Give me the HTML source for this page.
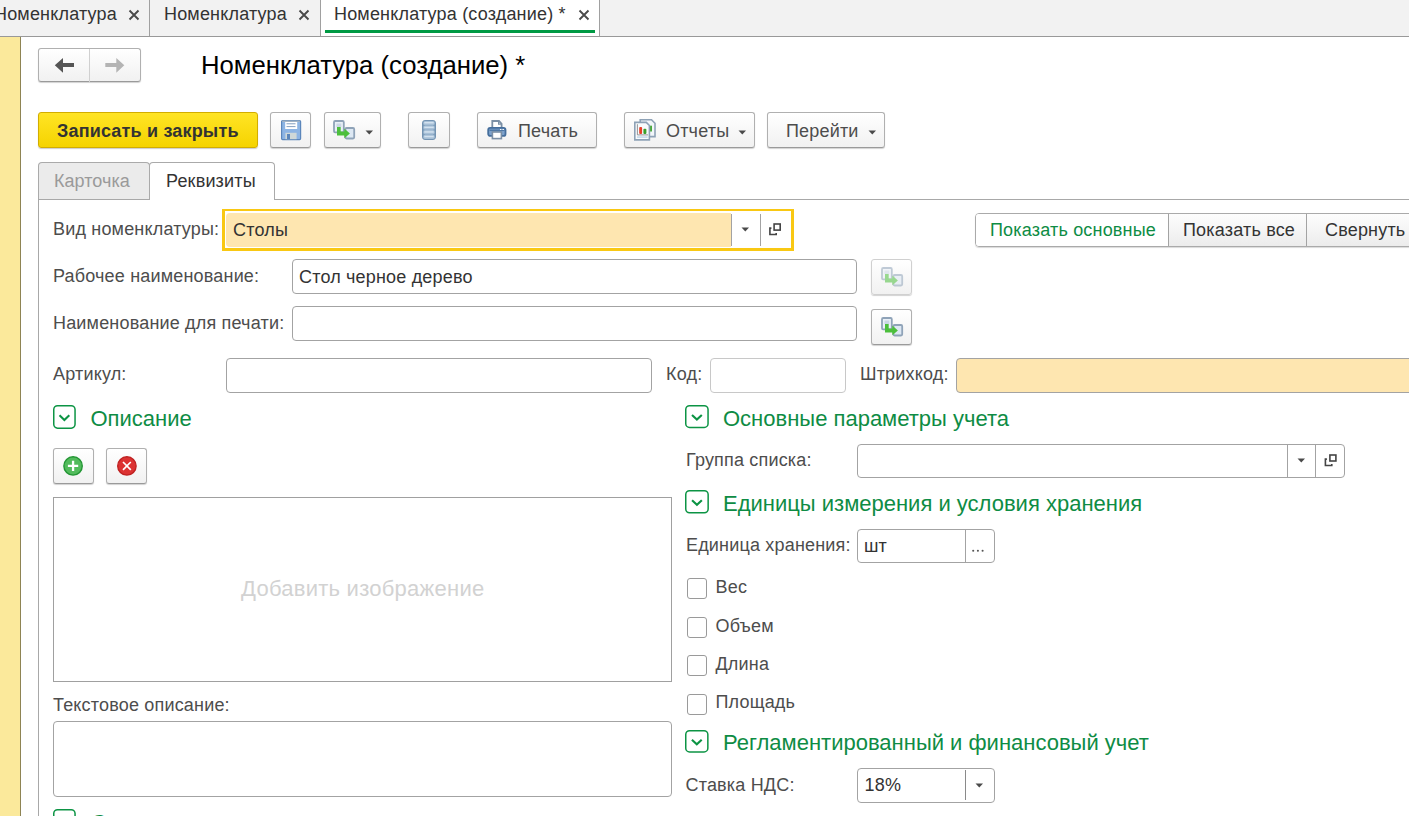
<!DOCTYPE html>
<html><head><meta charset="utf-8">
<style>
*{box-sizing:border-box;margin:0;padding:0}
html,body{width:1409px;height:816px;overflow:hidden;background:#fff}
body{position:relative;font-family:"Liberation Sans",sans-serif;font-size:18px;color:#4d4d4d;letter-spacing:.18px}
.a{position:absolute}
.t{position:absolute;white-space:nowrap;line-height:1}
/* tab bar */
#tabbar{left:0;top:0;width:1409px;height:37px;background:#f2f2f2;border-bottom:1px solid #999}
.tdiv{position:absolute;top:0;width:1px;height:36px;background:#a0a0a0}
#strip{left:0;top:37px;width:21px;height:779px;background:#fbe99b;border-right:1px solid #8e8454}
.btn{position:absolute;border:1px solid #b0b0b0;border-bottom-color:#9a9a9a;border-radius:3px;background:linear-gradient(#ffffff,#f1f1f1);box-shadow:0 1px 1px rgba(0,0,0,.18)}
.inp{position:absolute;border:1px solid #a3a3a3;border-radius:4px;background:#fff}
.lbl{position:absolute;white-space:nowrap;line-height:1;font-size:18px;color:#4d4d4d}
.grn{color:#0e8c44}
.coll{position:absolute;width:23px;height:24px;border:1.5px solid #0c9444;border-radius:4px}
.coll:after{content:"";position:absolute;left:7.2px;top:6.6px;width:5px;height:5px;border-right:1.8px solid #0c9444;border-bottom:1.8px solid #0c9444;transform:rotate(45deg)}
.chk{position:absolute;width:20px;height:21px;border:1px solid #9a9a9a;border-radius:3px;background:#fff}
.tri{position:absolute;width:0;height:0;border-left:3.5px solid transparent;border-right:3.5px solid transparent;border-top:4px solid #4a4a4a}
.sep{position:absolute;width:1px;background:#a3a3a3}
</style></head><body>

<div id="tabbar" class="a"></div>
<div class="a" style="left:320px;top:0;width:280px;height:36px;background:#fff"></div>
<div class="t" style="left:-6px;top:5px;color:#333">Номенклатура</div>
<svg class="a" style="left:128px;top:9px" width="12" height="12"><path d="M1.5 1.5L10.5 10.5M10.5 1.5L1.5 10.5" stroke="#4a4a4a" stroke-width="1.9"/></svg>
<div class="tdiv" style="left:149px"></div>
<div class="t" style="left:164px;top:5px;color:#333">Номенклатура</div>
<svg class="a" style="left:298px;top:9px" width="12" height="12"><path d="M1.5 1.5L10.5 10.5M10.5 1.5L1.5 10.5" stroke="#4a4a4a" stroke-width="1.9"/></svg>
<div class="tdiv" style="left:320px"></div>
<div class="t" style="left:334px;top:5px;color:#333">Номенклатура (создание) *</div>
<svg class="a" style="left:578px;top:9px" width="12" height="12"><path d="M1.5 1.5L10.5 10.5M10.5 1.5L1.5 10.5" stroke="#4a4a4a" stroke-width="1.9"/></svg>
<div class="a" style="left:325px;top:30px;width:270px;height:3px;background:#009a44"></div>
<div class="tdiv" style="left:599px"></div>

<div id="strip" class="a"></div>

<!-- nav buttons -->
<div class="btn" style="left:38px;top:48px;width:103px;height:34px"></div>
<div class="a" style="left:89px;top:49px;width:1px;height:33px;background:#d0d0d0"></div>

<div class="t" style="left:201px;top:53px;font-size:25.7px;color:#000;letter-spacing:0">Номенклатура (создание) *</div>


<!-- toolbar -->
<div class="a" style="left:38px;top:112px;width:220px;height:36px;border:1px solid #d2ad00;border-radius:3px;background:linear-gradient(#ffe425,#f5d300);box-shadow:0 1px 1px rgba(0,0,0,.2)"></div>
<div class="t" style="left:57px;top:122px;font-weight:bold;color:#333">Записать и закрыть</div>

<div class="btn" style="left:270px;top:112px;width:41px;height:36px"></div>
<div class="btn" style="left:324px;top:112px;width:57px;height:36px"></div>
<svg class="a" style="left:364.5px;top:129.5px" width="9" height="6"><path d="M0.5 0.5H8L4.25 4.6Z" fill="#4a4a4a"/></svg>
<div class="btn" style="left:408px;top:112px;width:42px;height:36px"></div>
<div class="btn" style="left:477px;top:112px;width:120px;height:36px"></div>
<div class="t" style="left:518px;top:122px">Печать</div>
<div class="btn" style="left:624px;top:112px;width:131px;height:36px"></div>
<div class="t" style="left:666px;top:122px">Отчеты</div>
<svg class="a" style="left:737.5px;top:129.5px" width="9" height="6"><path d="M0.5 0.5H8L4.25 4.6Z" fill="#4a4a4a"/></svg>
<div class="btn" style="left:767px;top:112px;width:118px;height:36px"></div>
<div class="t" style="left:786px;top:122px">Перейти</div>
<svg class="a" style="left:867.5px;top:129.5px" width="9" height="6"><path d="M0.5 0.5H8L4.25 4.6Z" fill="#4a4a4a"/></svg>

<!-- page tabs -->
<div class="a" style="left:38px;top:199px;width:1371px;height:1px;background:#a8a8a8"></div>
<div class="a" style="left:38px;top:199px;width:1px;height:617px;background:#a8a8a8"></div>
<div class="a" style="left:38px;top:162px;width:112px;height:37px;border:1px solid #aaa;border-bottom:none;border-radius:4px 4px 0 0;background:#ebebeb"></div>
<div class="t" style="left:54px;top:172px;color:#9a9a9a;letter-spacing:.05px">Карточка</div>
<div class="a" style="left:149px;top:162px;width:126px;height:38px;border:1px solid #aaa;border-bottom:none;border-radius:4px 4px 0 0;background:#fff"></div>
<div class="t" style="left:166px;top:172px;color:#333">Реквизиты</div>

<!-- fields -->
<div class="lbl" style="left:53px;top:220px">Вид номенклатуры:</div>
<div class="a" style="left:222px;top:209px;width:572px;height:42px;border:3px solid #f9c813;border-top-width:2px;background:#fff"></div>
<div class="a" style="left:226px;top:213px;width:505px;height:34px;border-radius:4px 0 0 4px;background:#fee6b0"></div>
<div class="sep" style="left:731px;top:214px;height:32px"></div>
<div class="sep" style="left:760px;top:214px;height:32px"></div>
<svg class="a" style="left:741.0px;top:226.5px" width="9" height="6"><path d="M0.5 0.5H8L4.25 4.6Z" fill="#4a4a4a"/></svg>
<div class="t" style="left:233px;top:221px;color:#333">Столы</div>

<div class="lbl" style="left:53px;top:267px">Рабочее наименование:</div>
<div class="inp" style="left:292px;top:259px;width:565px;height:35px"></div>
<div class="t" style="left:299px;top:268px;color:#333">Стол черное дерево</div>
<div class="btn" style="left:871px;top:259px;width:41px;height:36px;border-color:#d0d0d0"></div>

<div class="lbl" style="left:53px;top:314px">Наименование для печати:</div>
<div class="inp" style="left:292px;top:306px;width:565px;height:35px"></div>
<div class="btn" style="left:871px;top:309px;width:41px;height:36px"></div>

<div class="lbl" style="left:53px;top:365px">Артикул:</div>
<div class="inp" style="left:226px;top:358px;width:426px;height:35px"></div>
<div class="lbl" style="left:666px;top:365px">Код:</div>
<div class="inp" style="left:710px;top:358px;width:136px;height:35px;border-color:#c8c8c8"></div>
<div class="lbl" style="left:860px;top:365px">Штрихкод:</div>
<div class="inp" style="left:956px;top:358px;width:470px;height:35px;background:#fee6b0"></div>

<!-- switch buttons -->
<div class="a" style="left:975px;top:213px;width:450px;height:34px;border:1px solid #aaa;border-radius:4px;background:linear-gradient(#fdfdfd,#ececec);box-shadow:0 1px 1px rgba(0,0,0,.15)"></div>
<div class="a" style="left:976px;top:214px;width:192px;height:32px;border-radius:3px 0 0 3px;background:#fff"></div>
<div class="sep" style="left:1168px;top:214px;height:32px"></div>
<div class="sep" style="left:1306px;top:214px;height:32px"></div>
<div class="t grn" style="left:990px;top:221px">Показать основные</div>
<div class="t" style="left:1183px;top:221px;color:#333">Показать все</div>
<div class="t" style="left:1325px;top:221px;color:#333">Свернуть</div>


<!-- left column -->
<svg class="a" style="left:53.1px;top:404.9px" width="23.8" height="24.9"><rect x="0.75" y="0.75" width="21.30" height="22.40" rx="3.8" fill="none" stroke="#0c9444" stroke-width="1.5"/><path d="M6.50 10.35L11.40 14.95L16.30 10.35" fill="none" stroke="#0c9444" stroke-width="2.1"/></svg>
<div class="t grn" style="left:90.5px;top:408px;font-size:22px;letter-spacing:0">Описание</div>
<div class="btn" style="left:53px;top:448px;width:41px;height:36px"></div>
<div class="btn" style="left:106px;top:448px;width:41px;height:36px"></div>
<div class="a" style="left:53px;top:497px;width:619px;height:185px;border:1px solid #a0a0a0;background:#fff"></div>
<div class="t" style="left:241px;top:578px;font-size:22px;color:#d2d2d2;letter-spacing:.25px">Добавить изображение</div>
<div class="lbl" style="left:53px;top:696px">Текстовое описание:</div>
<div class="inp" style="left:53px;top:721px;width:619px;height:76px"></div>
<svg class="a" style="left:53px;top:809.3px" width="23.8" height="24.6"><rect x="0.75" y="0.75" width="21.30" height="22.10" rx="3.8" fill="none" stroke="#0c9444" stroke-width="1.5"/><path d="M6.50 10.20L11.40 14.80L16.30 10.20" fill="none" stroke="#0c9444" stroke-width="2.1"/></svg>

<!-- right column -->
<svg class="a" style="left:684.8px;top:405.4px" width="24.8" height="24.2"><rect x="0.75" y="0.75" width="22.30" height="21.70" rx="3.8" fill="none" stroke="#0c9444" stroke-width="1.5"/><path d="M7.00 10.00L11.90 14.60L16.80 10.00" fill="none" stroke="#0c9444" stroke-width="2.1"/></svg>
<div class="t grn" style="left:723px;top:408px;font-size:22px;letter-spacing:0">Основные параметры учета</div>
<div class="lbl" style="left:686px;top:451px">Группа списка:</div>
<div class="inp" style="left:857px;top:444px;width:488px;height:34px"></div>
<div class="sep" style="left:1287px;top:445px;height:32px"></div>
<div class="sep" style="left:1315px;top:445px;height:32px"></div>
<svg class="a" style="left:1297.0px;top:457.5px" width="9" height="6"><path d="M0.5 0.5H8L4.25 4.6Z" fill="#4a4a4a"/></svg>

<svg class="a" style="left:685px;top:490.1px" width="24.9" height="24.6"><rect x="0.75" y="0.75" width="22.40" height="22.10" rx="3.8" fill="none" stroke="#0c9444" stroke-width="1.5"/><path d="M7.05 10.20L11.95 14.80L16.85 10.20" fill="none" stroke="#0c9444" stroke-width="2.1"/></svg>
<div class="t grn" style="left:723px;top:493px;font-size:22px;letter-spacing:0">Единицы измерения и условия хранения</div>
<div class="lbl" style="left:686px;top:536px">Единица хранения:</div>
<div class="inp" style="left:857px;top:529px;width:138px;height:34px"></div>
<div class="sep" style="left:965px;top:530px;height:32px"></div>
<div class="t" style="left:864px;top:537px;color:#333">шт</div>
<svg class="a" style="left:970px;top:548px" width="16" height="6"><circle cx="3.2" cy="2.8" r="1.05" fill="#555"/><circle cx="7.9" cy="2.8" r="1.05" fill="#555"/><circle cx="12.6" cy="2.8" r="1.05" fill="#555"/></svg>

<div class="chk" style="left:687px;top:578px"></div>
<div class="lbl" style="left:715.5px;top:578px">Вес</div>
<div class="chk" style="left:687px;top:617px"></div>
<div class="lbl" style="left:715.5px;top:617px">Объем</div>
<div class="chk" style="left:687px;top:655px"></div>
<div class="lbl" style="left:715.5px;top:655px">Длина</div>
<div class="chk" style="left:687px;top:694px"></div>
<div class="lbl" style="left:715.5px;top:693px">Площадь</div>

<svg class="a" style="left:685.1px;top:730.1px" width="24.6" height="23.7"><rect x="0.75" y="0.75" width="22.10" height="21.20" rx="3.8" fill="none" stroke="#0c9444" stroke-width="1.5"/><path d="M6.90 9.75L11.80 14.35L16.70 9.75" fill="none" stroke="#0c9444" stroke-width="2.1"/></svg>
<div class="t grn" style="left:723px;top:732px;font-size:22px;letter-spacing:0">Регламентированный и финансовый учет</div>
<div class="lbl" style="left:685.5px;top:776px">Ставка НДС:</div>
<div class="inp" style="left:857px;top:768px;width:138px;height:35px"></div>
<div class="sep" style="left:965px;top:770px;height:30px;background:#8a8a8a"></div>
<svg class="a" style="left:974.5px;top:782.5px" width="9" height="6"><path d="M0.5 0.5H8L4.25 4.6Z" fill="#4a4a4a"/></svg>
<div class="t" style="left:864.5px;top:776px;color:#333">18%</div>


<!-- ICONS -->
<svg class="a" style="left:38px;top:48px" width="104" height="36">
<path d="M16.8 17.2L25 9.9V15H36V19H25V24.8Z" fill="#555"/>
<path d="M86.3 17.2L78.3 9.9V15H67.3V19H78.3V24.8Z" fill="#b4b4b4"/>
</svg>
<svg class="a" style="left:281px;top:120px" width="21" height="21">
<rect x="0.6" y="0.6" width="19" height="19" rx="1" fill="#8cb4e4" stroke="#5b86bb" stroke-width="1.2"/>
<rect x="1.2" y="0.5" width="17.6" height="1.5" fill="#a4b4c4"/>
<rect x="4.2" y="2" width="12" height="7" fill="#fff"/>
<rect x="5.5" y="3.2" width="9" height="1.1" fill="#8fa8c6"/>
<rect x="5.5" y="6" width="9" height="1.1" fill="#8fa8c6"/>
<rect x="4.4" y="12.8" width="11.2" height="6.4" fill="#cfd8d8"/>
<rect x="6" y="14" width="3" height="5.2" fill="#5b86bb"/>
</svg>
<svg class="a" style="left:330px;top:115px" width="30" height="30">
<rect x="4" y="6" width="9.8" height="11.4" rx="1.2" fill="#e9f0f7" stroke="#8fa3b8" stroke-width="1.8"/>
<rect x="6.5" y="8.5" width="4.8" height="3.5" fill="#c9d6e4"/>
<rect x="15.4" y="13" width="8.8" height="10.5" rx="1.2" fill="#dde8f3" stroke="#8fa3b8" stroke-width="1.8"/>
<path d="M7 12.1H10.7V16.4H14.3V13.6L19.9 18.4L14.3 23.2V20.4H7Z" fill="#4cbf3c"/>
</svg>
<svg class="a" style="left:422px;top:120px" width="14" height="20"><rect x="0.5" y="0.5" width="13" height="19" rx="2.4" fill="#7c9cba" stroke="#7393b2" stroke-width="1"/><rect x="1.3" y="0.9" width="11.4" height="4.3" rx="1.8" fill="#a6bfd6"/><rect x="2.3" y="2.0" width="9.4" height="1.5" fill="#d3e2ef"/><rect x="1.3" y="5.5" width="11.4" height="4.3" rx="1.8" fill="#a6bfd6"/><rect x="2.3" y="6.6" width="9.4" height="1.5" fill="#d3e2ef"/><rect x="1.3" y="10.1" width="11.4" height="4.3" rx="1.8" fill="#a6bfd6"/><rect x="2.3" y="11.2" width="9.4" height="1.5" fill="#d3e2ef"/><rect x="1.3" y="14.7" width="11.4" height="4.3" rx="1.8" fill="#a6bfd6"/><rect x="2.3" y="15.8" width="9.4" height="1.5" fill="#d3e2ef"/></svg>
<svg class="a" style="left:482px;top:115px" width="30" height="30">
<path d="M10.3 12V6H17L19.6 8.8V12" fill="#fff" stroke="#7b8fa5" stroke-width="1.8"/><path d="M16.6 6V9.2H19.6" fill="none" stroke="#7b8fa5" stroke-width="1.2"/>
<rect x="6.2" y="12.9" width="17.3" height="8" rx="2" fill="#7da2cd" stroke="#456e9c" stroke-width="1.8"/>
<rect x="7.5" y="14.6" width="15" height="1.2" fill="#456e9c"/>
<rect x="18" y="14" width="1.4" height="1" fill="#fff"/><rect x="20.5" y="14" width="1.4" height="1" fill="#fff"/>
<rect x="10.4" y="17" width="9" height="6.6" fill="#fff" stroke="#7b8fa5" stroke-width="1.6"/>
</svg>
<svg class="a" style="left:630px;top:115px" width="30" height="30">
<path d="M10.2 4.8H21.5L25 8.3V21.6H10.2Z" fill="#f2f6fa" stroke="#8ea2b6" stroke-width="1.6"/>
<rect x="20" y="10.7" width="2" height="5.8" fill="#4aaa3a"/>
<path d="M4.8 7.4H16.3L19.4 10.5V24.9H4.8Z" fill="#f8fbfd" stroke="#8ea2b6" stroke-width="1.6"/>
<path d="M7.4 9.2V19.9H18" fill="none" stroke="#8a8a8a" stroke-width="0.9"/>
<rect x="9.2" y="12" width="2.9" height="7.1" rx="1" fill="#e8402a"/>
<rect x="13.4" y="13.8" width="3" height="5.3" rx="1" fill="#3aa02a"/>
<rect x="7" y="21.6" width="10.5" height="0.9" fill="#9fc0dc"/>
</svg>
<!-- open icons -->
<svg class="a" style="left:768px;top:222px" width="15" height="15">
<path d="M3.4 6.1H1.9V12.5H8.2V11" fill="none" stroke="#444" stroke-width="1.6"/>
<rect x="6.1" y="2" width="6.1" height="6.1" fill="none" stroke="#444" stroke-width="1.6"/>
</svg>
<svg class="a" style="left:1323px;top:453px" width="15" height="15">
<path d="M3.9 6.1H2.4V12.5H8.8V11" fill="none" stroke="#444" stroke-width="1.6"/>
<rect x="6.9" y="2" width="6" height="6" fill="none" stroke="#444" stroke-width="1.6"/>
</svg>
<!-- add/del -->
<svg class="a" style="left:62px;top:455px" width="22" height="22">
<circle cx="11.07" cy="10.9" r="9.2" fill="#52bb5c" stroke="#239634" stroke-width="1.4"/>
<path d="M5.9 10.9H16.2M11.07 5.7V16.1" stroke="#fff" stroke-width="2.3"/>
</svg>
<svg class="a" style="left:116px;top:455px" width="22" height="22">
<circle cx="10.9" cy="10.9" r="9.2" fill="#dc3232" stroke="#bf2222" stroke-width="1.4"/>
<path d="M7 7L14.8 14.8M14.8 7L7 14.8" stroke="#fff" stroke-width="1.7"/>
</svg>


<svg class="a" style="left:878px;top:262px;opacity:.55" width="30" height="30"><rect x="4" y="6" width="9.8" height="11.4" rx="1.2" fill="#e9f0f7" stroke="#8fa3b8" stroke-width="1.8"/>
<rect x="6.5" y="8.5" width="4.8" height="3.5" fill="#c9d6e4"/>
<rect x="15.4" y="13" width="8.8" height="10.5" rx="1.2" fill="#dde8f3" stroke="#8fa3b8" stroke-width="1.8"/>
<path d="M7 12.1H10.7V16.4H14.3V13.6L19.9 18.4L14.3 23.2V20.4H7Z" fill="#4cbf3c"/></svg>
<svg class="a" style="left:878px;top:312px" width="30" height="30"><rect x="4" y="6" width="9.8" height="11.4" rx="1.2" fill="#e9f0f7" stroke="#8fa3b8" stroke-width="1.8"/>
<rect x="6.5" y="8.5" width="4.8" height="3.5" fill="#c9d6e4"/>
<rect x="15.4" y="13" width="8.8" height="10.5" rx="1.2" fill="#dde8f3" stroke="#8fa3b8" stroke-width="1.8"/>
<path d="M7 12.1H10.7V16.4H14.3V13.6L19.9 18.4L14.3 23.2V20.4H7Z" fill="#4cbf3c"/></svg>
<div class="t grn" style="left:91px;top:812px;font-size:22px;letter-spacing:0">Основные</div>

</body></html>
